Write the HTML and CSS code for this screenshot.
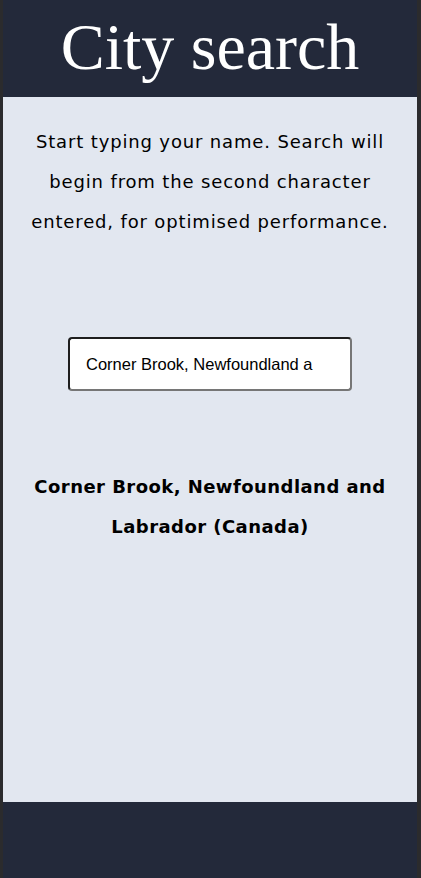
FILE: index.html
```html
<!DOCTYPE html>
<html lang="en">
<head>
<meta charset="utf-8">
<title>City search</title>
<link rel="stylesheet" href="styles.css">
</head>
<body>
<div class="frame">
  <header class="top">
    <h1 class="title">City search</h1>
  </header>
  <main class="content">
    <p class="intro">Start typing your name. Search will begin from the second character entered, for optimised performance.</p>
    <div class="search">
      <input class="field" type="text" value="Corner Brook, Newfoundland a">
    </div>
    <p class="result">Corner Brook, Newfoundland and Labrador (Canada)</p>
  </main>
  <footer class="bottom"></footer>
</div>
</body>
</html>
```
FILE: styles.css
```css
html, body {
  margin: 0;
  padding: 0;
  background: #2b2b2d;
}
.frame {
  margin: 0 4px 0 3px;
  height: 878px;
  display: flex;
  flex-direction: column;
  background: #23293a;
}
.top {
  height: 97px;
  display: flex;
  align-items: center;
  justify-content: center;
}
.title {
  margin: 0;
  font-family: "Liberation Serif", "DejaVu Serif", serif;
  font-weight: normal;
  font-size: 66px;
  line-height: 1;
  color: #ffffff;
  padding-bottom: 4px;
}
.content {
  height: 705px;
  background: #e2e7f0;
  padding: 25px 22px 0;
  box-sizing: border-box;
  text-align: center;
  font-family: "DejaVu Sans", "Open Sans", sans-serif;
  color: #000;
}
.intro {
  margin: 0;
  font-size: 18px;
  letter-spacing: 0.85px;
  line-height: 40px;
}
.search {
  margin-top: 95px;
  display: flex;
  justify-content: center;
}
.field {
  width: 284px;
  height: 54px;
  box-sizing: border-box;
  border: 2px solid #767676;
  border-top-color: #1e1e1e;
  border-left-color: #1e1e1e;
  border-radius: 4px;
  background: #fff;
  padding: 0 16px;
  font-family: "Liberation Sans", Arial, sans-serif;
  font-size: 16.5px;
  color: #000;
  outline: none;
}
.result {
  margin: 76px 0 0;
  font-size: 18px;
  font-weight: bold;
  letter-spacing: 0.45px;
  line-height: 40px;
}
.bottom {
  flex: 1;
}
```
